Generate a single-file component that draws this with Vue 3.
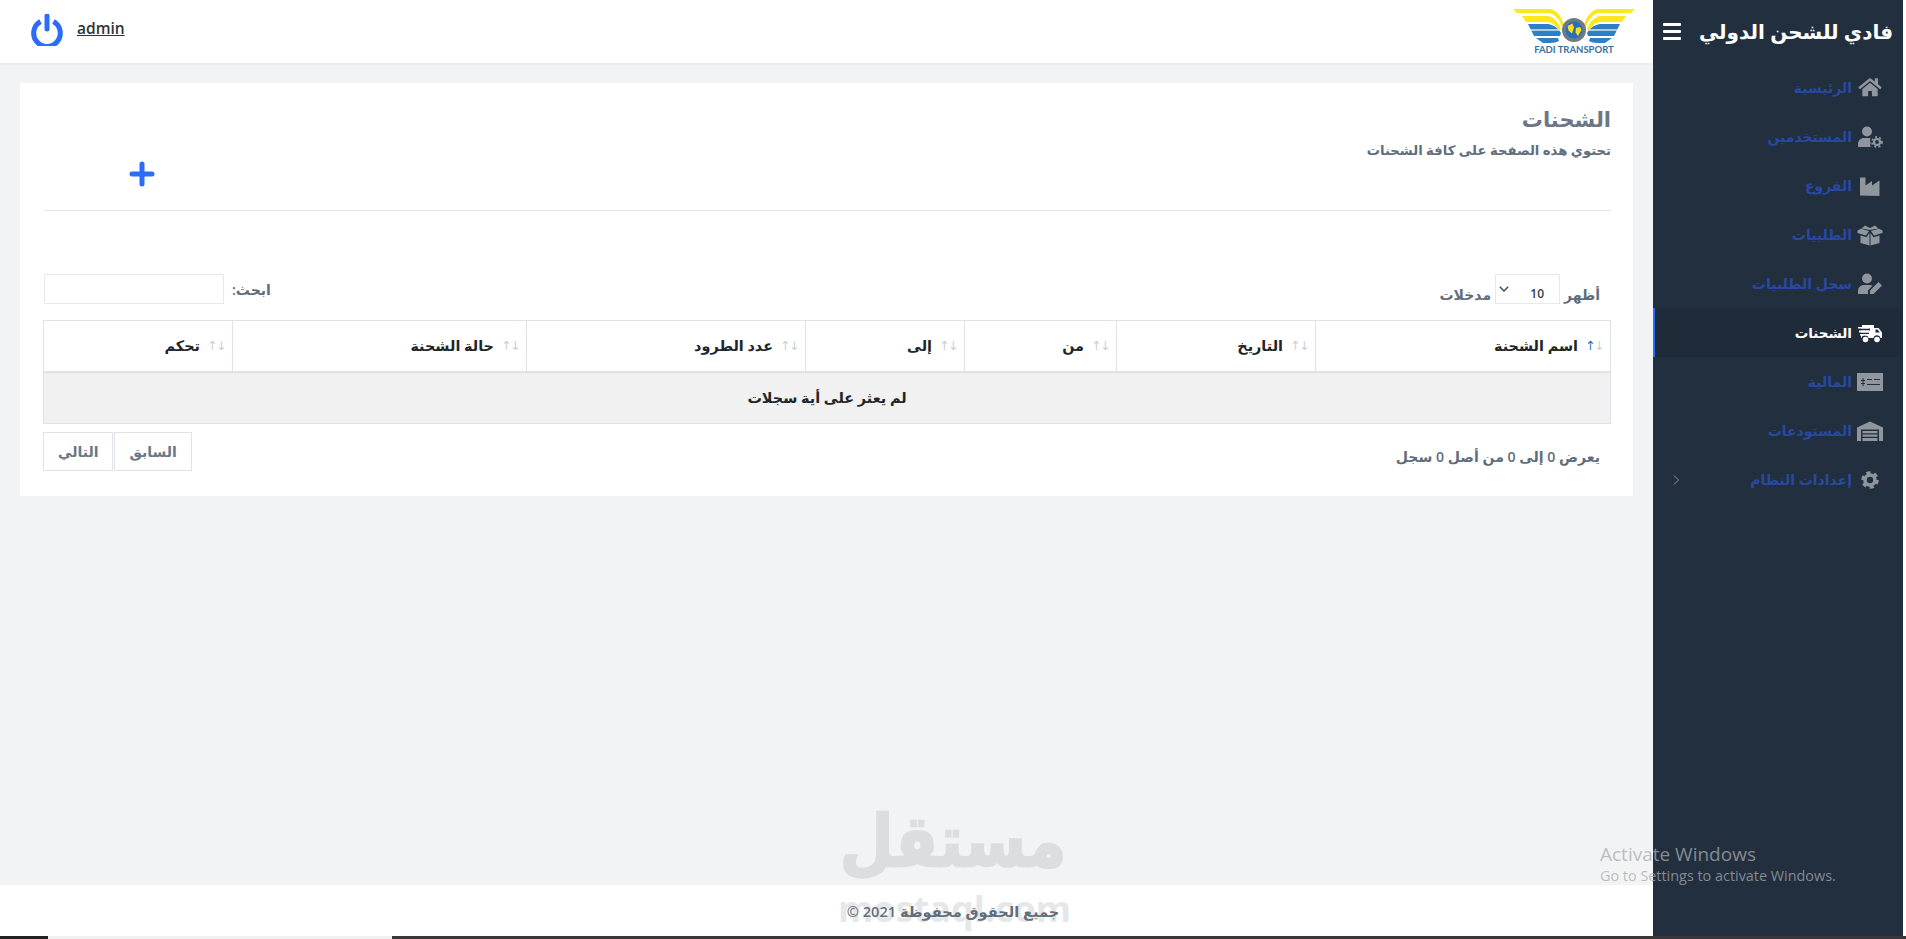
<script setup>
const menu = [
  { label: 'الرئيسية', icon: 'home' },
  { label: 'المستخدمين', icon: 'usercog' },
  { label: 'الفروع', icon: 'industry' },
  { label: 'الطلبيات', icon: 'box' },
  { label: 'سجل الطلبيات', icon: 'useredit' },
  { label: 'الشحنات', icon: 'truck', active: true },
  { label: 'المالية', icon: 'money' },
  { label: 'المستودعات', icon: 'warehouse' },
  { label: 'إعدادات النظام', icon: 'cog', more: true },
]
const columns = [
  { label: 'اسم الشحنة', width: 295, sorted: true },
  { label: 'التاريخ', width: 199 },
  { label: 'من', width: 152 },
  { label: 'إلى', width: 159 },
  { label: 'عدد الطرود', width: 279 },
  { label: 'حالة الشحنة', width: 294 },
  { label: 'تحكم', width: 189 },
]
const wingBlue = 'M16 16H36C42 17 46 20 49 25L48 28H22zM24 30H46L47 33C45 34 42 35 38 35H31z'
</script>

<template>
  <div class="page">
    <div class="body">
      <aside class="sidebar">
        <div class="brand">
          <span class="brand-name">فادي للشحن الدولي</span>
          <span class="burger"><i></i><i></i><i></i></span>
        </div>
        <nav class="nav">
          <a v-for="item in menu" :key="item.label" class="nav-item" :class="{ active: item.active }">
            <svg class="nav-icon" viewBox="0 0 26 22" fill="currentColor">
              <g v-if="item.icon === 'home'" transform="translate(1.5 0) scale(0.04)">
                <path d="M280.37 148.26L96 300.11V464a16 16 0 0 0 16 16l112.06-.29a16 16 0 0 0 15.92-16V368a16 16 0 0 1 16-16h64a16 16 0 0 1 16 16v95.64a16 16 0 0 0 16 16.05L464 480a16 16 0 0 0 16-16V300L295.67 148.26a12.19 12.19 0 0 0-15.3 0zM571.6 251.47L488 182.56V44.05a12 12 0 0 0-12-12h-56a12 12 0 0 0-12 12v72.61L318.47 43a48 48 0 0 0-61 0L4.34 251.47a12 12 0 0 0-1.6 16.9l25.5 31A12 12 0 0 0 45.15 301l235.22-193.74a12.19 12.19 0 0 1 15.3 0L530.9 301a12 12 0 0 0 16.9-1.6l25.5-31a12 12 0 0 0-1.7-16.93z" />
              </g>
              <g v-else-if="item.icon === 'usercog'">
                <circle cx="10" cy="5.500" r="5" />
                <path d="M1 21v-3c0-3.400 2.600-6 6-6h6.500c-.8 1.600-.5 3.400.3 5-.8 1.300-.8 2.800 0 4z" />
                <circle cx="20" cy="16" r="3" fill="none" stroke="currentColor" stroke-width="2.200" />
                <circle cx="20" cy="16" r="5" fill="none" stroke="currentColor" stroke-width="1.800" stroke-dasharray="2 2.200" />
              </g>
              <path v-else-if="item.icon === 'industry'" d="M3 20.500V2.500h5.500v8l6.500-4.500v4.500l7.500-5v15.500z" />
              <path v-else-if="item.icon === 'box'" d="M13 6 4.500 4.500 8 1.500 13 4l5-2.500 3.500 3zM.5 6.500 4 4.800 12 7l-3 4.500-8.500-2.500zM25.500 6.500 22 4.800 14 7l3 4.500 8.500-2.500zM3.500 11.500l6 1.800L12.500 9v12.500L3.500 19zM22.500 11.500l-6 1.800L13.500 9v12.500l9-2.500z" />
              <g v-else-if="item.icon === 'useredit'">
                <circle cx="10" cy="5.500" r="5" />
                <path d="M1 21v-3c0-3.400 2.600-6 6-6h6c1 0 1.800.2 2.600.6L11 17.500V21z" />
                <path d="M13 17.500 21.500 9l3.500 3.500L16.500 21H13z" />
              </g>
              <g v-else-if="item.icon === 'truck'">
                <path d="M5 3h12v3h4.500l3.500 4.500V16h-1.500a3.600 3.600 0 0 0-7 0h-5a3.600 3.600 0 0 0-7 0H4v-4h8V10.500H4V8.500h9V6.500H4V5h1z" />
                <path d="M18.500 7.500V10.500h4.300l-2.300-3z" fill="#1f2b39" />
                <path d="M1 5h11v1.500H1zM2 8.500h10v2H2zM3 12h9v1.500H3z" />
                <circle cx="8.500" cy="17.500" r="2.800" />
                <circle cx="20" cy="17.500" r="2.800" />
              </g>
              <g v-else-if="item.icon === 'money'">
                <rect x="0" y="2" width="26" height="18" />
                <rect x="10" y="8" width="5" height="1" fill="#222f3f" />
                <rect x="17" y="8" width="6" height="1" fill="#222f3f" />
                <rect x="10" y="13" width="13" height="1" fill="#222f3f" />
                <rect x="5.600" y="7" width="1" height="8" fill="#222f3f" />
                <rect x="4" y="9" width="4" height="1" fill="#222f3f" />
                <rect x="4" y="12" width="4" height="1" fill="#222f3f" />
              </g>
              <g v-else-if="item.icon === 'warehouse'">
                <path d="M0 21V7.500L13 1.500l13 6V21h-4V9.500H4V21z" />
                <path d="M5.500 11h15v2.200h-15zM5.500 14.500h15v2.200h-15zM5.500 18h15V21h-15z" />
              </g>
              <g v-else-if="item.icon === 'cog'">
                <circle cx="13" cy="11" r="5" fill="none" stroke="currentColor" stroke-width="3.600" />
                <circle cx="13" cy="11" r="7.500" fill="none" stroke="currentColor" stroke-width="2.600" stroke-dasharray="4.200 3.650" />
              </g>
            </svg>
            <span class="nav-label">{{ item.label }}</span>
            <svg v-if="item.more" class="nav-more" viewBox="0 0 6 10" fill="none" stroke="currentColor" stroke-width="1">
              <path d="M1 .5 5.500 5 1 9.500" />
            </svg>
          </a>
        </nav>
      </aside>

      <div class="main">
        <header class="topbar">
          <svg class="logo" viewBox="0 0 124 50">
            <g>
              <path d="M1 1H38C45 2 49 8 52 17L50 19C47 11 43 6 37 5H5z" fill="#fbe91e" />
              <path d="M10 8H36C42 9 46 14 49 21L47 23C44 17 40 14 34 14H14z" fill="#fbe91e" />
              <path :d="wingBlue" fill="#2e7fc4" />
              <path d="M19 22H47" stroke="#fff" stroke-width="1.200" fill="none" />
            </g>
            <g transform="translate(124 0) scale(-1 1)">
              <path d="M1 1H38C45 2 49 8 52 17L50 19C47 11 43 6 37 5H5z" fill="#fbe91e" />
              <path d="M10 8H36C42 9 46 14 49 21L47 23C44 17 40 14 34 14H14z" fill="#fbe91e" />
              <path :d="wingBlue" fill="#2e7fc4" />
              <path d="M19 22H47" stroke="#fff" stroke-width="1.200" fill="none" />
            </g>
            <circle cx="62" cy="22" r="12" fill="#6f7a86" />
            <circle cx="62" cy="22" r="8.500" fill="#2a6fb5" />
            <path d="M55.500 18l5-2.500 1.500 4-2 6-3.500-3zM64 20l4-1 1.500 3-3.500 6-2.500-3.500z" fill="#fbdc1e" />
            <text x="62" y="44.500" class="logo-text" text-anchor="middle">FADI TRANSPORT</text>
          </svg>
          <div class="user">
            <svg class="power" viewBox="0 0 32 32" fill="none" stroke="#2b6cff" stroke-width="5">
              <path d="M9.500 7.500a13.300 13.300 0 1 0 13 0" />
              <path d="M16 2v13" stroke-linecap="round" />
            </svg>
            <a class="user-name">admin</a>
          </div>
        </header>

        <section class="content">
          <div class="card">
            <h1 class="title">الشحنات</h1>
            <p class="subtitle">تحتوي هذه الصفحة على كافة الشحنات</p>
            <div class="add-row">
              <svg class="plus" viewBox="0 0 26 26" stroke="#2b6cff" stroke-width="5" stroke-linecap="round">
                <path d="M13 3v20M3 13h20" />
              </svg>
            </div>
            <hr class="rule" />

            <div class="controls">
              <label class="control">
                <span>أظهر</span>
                <span class="select-wrap">
                  <select class="select"><option>10</option></select>
                  <svg class="chevron" viewBox="0 0 10 6" fill="none" stroke="#444f5b" stroke-width="1.500">
                    <path d="M.8.800 5 5 9.200.800" />
                  </svg>
                </span>
                <span>مدخلات</span>
              </label>
              <label class="control search">
                <span>ابحث:</span>
                <input class="search-input" type="text" />
              </label>
            </div>

            <table class="table">
              <colgroup>
                <col v-for="c in columns" :key="c.label" :style="{ width: c.width + 'px' }" />
              </colgroup>
              <thead>
                <tr>
                  <th v-for="c in columns" :key="c.label">
                    <span class="th-inner">
                      <span class="sort"><b :class="{ on: c.sorted }">↑</b><b>↓</b></span>
                      <span>{{ c.label }}</span>
                    </span>
                  </th>
                </tr>
              </thead>
              <tbody>
                <tr>
                  <td :colspan="columns.length">لم يعثر على أية سجلات</td>
                </tr>
              </tbody>
            </table>

            <div class="table-foot">
              <span class="info">يعرض 0 إلى 0 من أصل 0 سجل</span>
              <div class="pager">
                <button class="page-btn">السابق</button>
                <button class="page-btn">التالي</button>
              </div>
            </div>
          </div>
        </section>

        <footer class="footer">جميع الحقوق محفوظة 2021 ©</footer>
      </div>
    </div>

    <div class="strip">
      <span class="seg-a"></span><span class="seg-b"></span><span class="seg-c"></span>
    </div>

    <div class="watermark">
      <div class="wm-ar">مستقل</div>
      <div class="wm-en">mostaql.com</div>
    </div>
    <div class="activate">
      <div class="act-1">Activate Windows</div>
      <div class="act-2">Go to Settings to activate Windows.</div>
    </div>
  </div>
</template>

<style>
html, body { margin: 0; background: #fff; }
</style>

<style scoped>
.page {
  position: relative;
  width: 1906px;
  height: 939px;
  overflow: hidden;
  display: flex;
  flex-direction: column;
  direction: rtl;
  font-family: "Open Sans", "DejaVu Sans", sans-serif;
  color: #5f6e7d;
}
.body { flex: 1; display: flex; min-height: 0; padding-right: 3px; }

.sidebar { width: 250px; flex: none; background: #222f3f; color: #fff; }
.brand { height: 63px; display: flex; align-items: center; justify-content: space-between; padding: 0 10px; }
.brand-name { font-size: 20px; font-weight: 700; white-space: nowrap; }
.burger { display: flex; flex-direction: column; gap: 4px; width: 18px; }
.burger i { display: block; height: 3px; background: #fff; border-radius: 1px; }
.nav { display: flex; flex-direction: column; }
.nav-item {
  height: 49px;
  display: flex;
  align-items: center;
  gap: 5px;
  padding: 0 20px;
  color: #2849a3;
  font-size: 14px;
  font-weight: 600;
}
.nav-item.active { background: #1f2b39; color: #fff; font-weight: 700; font-size: 13.500px; box-shadow: inset 2px 0 0 #2b6cff; }
.nav-icon { width: 26px; height: 22px; flex: none; color: #8f969e; }
.active .nav-icon { color: #fff; }
.nav-more { width: 6px; height: 10px; margin-right: auto; color: #8f969e; }

.main { flex: 1; min-width: 0; display: flex; flex-direction: column; background: #f2f3f5; }
.topbar {
  height: 63px;
  flex: none;
  background: #fff;
  display: flex;
  align-items: center;
  justify-content: space-between;
  padding: 0 17px 0 31px;
  box-shadow: 0 1px 2px rgba(0, 0, 0, .05);
  position: relative;
}
.logo { width: 124px; height: 50px; margin-top: 3px; }
.logo-text { font: 700 9.500px "Lato", sans-serif; fill: #3a6f9c; }
.user { display: flex; align-items: center; gap: 14px; direction: ltr; margin-top: -3px; }
.power { width: 32px; height: 32px; }
.user-name { font-size: 15.500px; font-weight: 600; color: #333; text-decoration: underline; margin-top: -4px; }

.content { flex: 1; min-height: 0; padding: 20px 20px 0; }
.card { background: #fff; height: 413px; padding: 23px 22px 0 24px; box-sizing: border-box; }
.title { margin: 0; font-size: 21px; line-height: 26px; font-weight: 700; color: #6b7785; }
.subtitle { margin: 9px 0 0; font-size: 13.200px; line-height: 18px; font-weight: 600; color: #5f6e7d; }
.add-row { display: flex; justify-content: flex-end; align-items: flex-start; padding: 2px 0 0 85px; height: 51px; box-sizing: border-box; }
.plus { width: 26px; height: 26px; }
.rule { margin: 0; border: 0; border-top: 1px solid #e3e6ea; }

.controls { display: flex; justify-content: space-between; margin-top: 63px; padding-right: 11px; height: 30px; }
.control { display: flex; align-items: center; gap: 4px; font-size: 14px; font-weight: 600; }
.control > span:first-child { margin-top: 10px; }
.control > span:last-child { margin-top: 10px; }
.search { gap: 8px; }
.search > span:first-child { margin-top: 0; }
.select-wrap { position: relative; display: block; width: 65px; height: 30px; }
.select {
  appearance: none;
  width: 100%;
  height: 100%;
  border: 1px solid #e6e8eb;
  background: #fff;
  padding: 9px 15px 0 0;
  font: 600 12px "Open Sans", sans-serif;
  color: #333f4b;
  outline: 0;
  direction: rtl;
}
.chevron { position: absolute; left: 4px; top: 12px; width: 10px; height: 6px; }
.search-input { width: 180px; height: 30px; box-sizing: border-box; border: 1px solid #e6e8eb; background: #fff; outline: 0; }

.table {
  width: 1567px;
  margin-top: 16px;
  border-collapse: collapse;
  table-layout: fixed;
  font-size: 14.400px;
  font-weight: 600;
  color: #212529;
}
.table th { height: 51px; padding: 0 9px; border: 1px solid #dfe2e6; border-bottom-width: 2px; font-weight: 600; text-align: right; box-sizing: border-box; }
.table td { height: 52px; text-align: center; background: #f1f1f2; border: 1px solid #dfe2e6; box-sizing: border-box; }
.th-inner { display: flex; align-items: center; gap: 9px; }
.sort { display: flex; font-size: 12.500px; color: #c9d0d7; width: 14px; flex: none; direction: ltr; font-family: "DejaVu Sans", sans-serif; justify-content: center; letter-spacing: -1.500px; }
.sort b { font-weight: 400; }
.sort .on { color: #2a6fb5; }

.table-foot { display: flex; justify-content: space-between; align-items: flex-start; margin-top: 8px; padding-right: 11px; }
.info { font-size: 14.100px; font-weight: 600; line-height: 20px; margin-top: 15px; }
.pager { display: flex; margin-left: -1px; }
.page-btn {
  height: 39px;
  padding: 0 14px;
  background: #fff;
  border: 1px solid #dfe2e6;
  color: #6b7785;
  font: 600 14px "Open Sans", "DejaVu Sans", sans-serif;
}
.page-btn + .page-btn { margin-right: 1px; }

.footer { height: 51px; flex: none; background: #fff; display: flex; align-items: center; justify-content: center; font-size: 14.600px; font-weight: 600; color: #5f6e7d; padding-left: 253px; box-sizing: border-box; }

.strip { height: 3px; flex: none; display: flex; direction: ltr; background: #2a2627; }
.seg-a { width: 48px; background: #222; }
.seg-b { width: 344px; background: #f0f0f0; }
.seg-c { flex: 1; background: #3a3536; }

.watermark { position: absolute; left: 838px; top: 800px; width: 230px; text-align: center; color: #787d82; opacity: .18; direction: rtl; pointer-events: none; font-family: "DejaVu Sans", sans-serif; font-weight: 700; }
.wm-ar { font-size: 62px; line-height: 84px; transform: scaleY(1.15); -webkit-text-stroke: 2px #787d82; }
.wm-en { font-size: 36px; line-height: 34px; margin-top: 8px; direction: ltr; font-family: "Open Sans", sans-serif; }

.activate { position: absolute; left: 1600px; top: 842px; direction: ltr; color: rgba(170, 170, 170, .75); font-family: "Open Sans", sans-serif; pointer-events: none; white-space: nowrap; }
.act-1 { font-size: 19px; line-height: 24px; }
.act-2 { font-size: 14.400px; line-height: 20px; }
</style>
